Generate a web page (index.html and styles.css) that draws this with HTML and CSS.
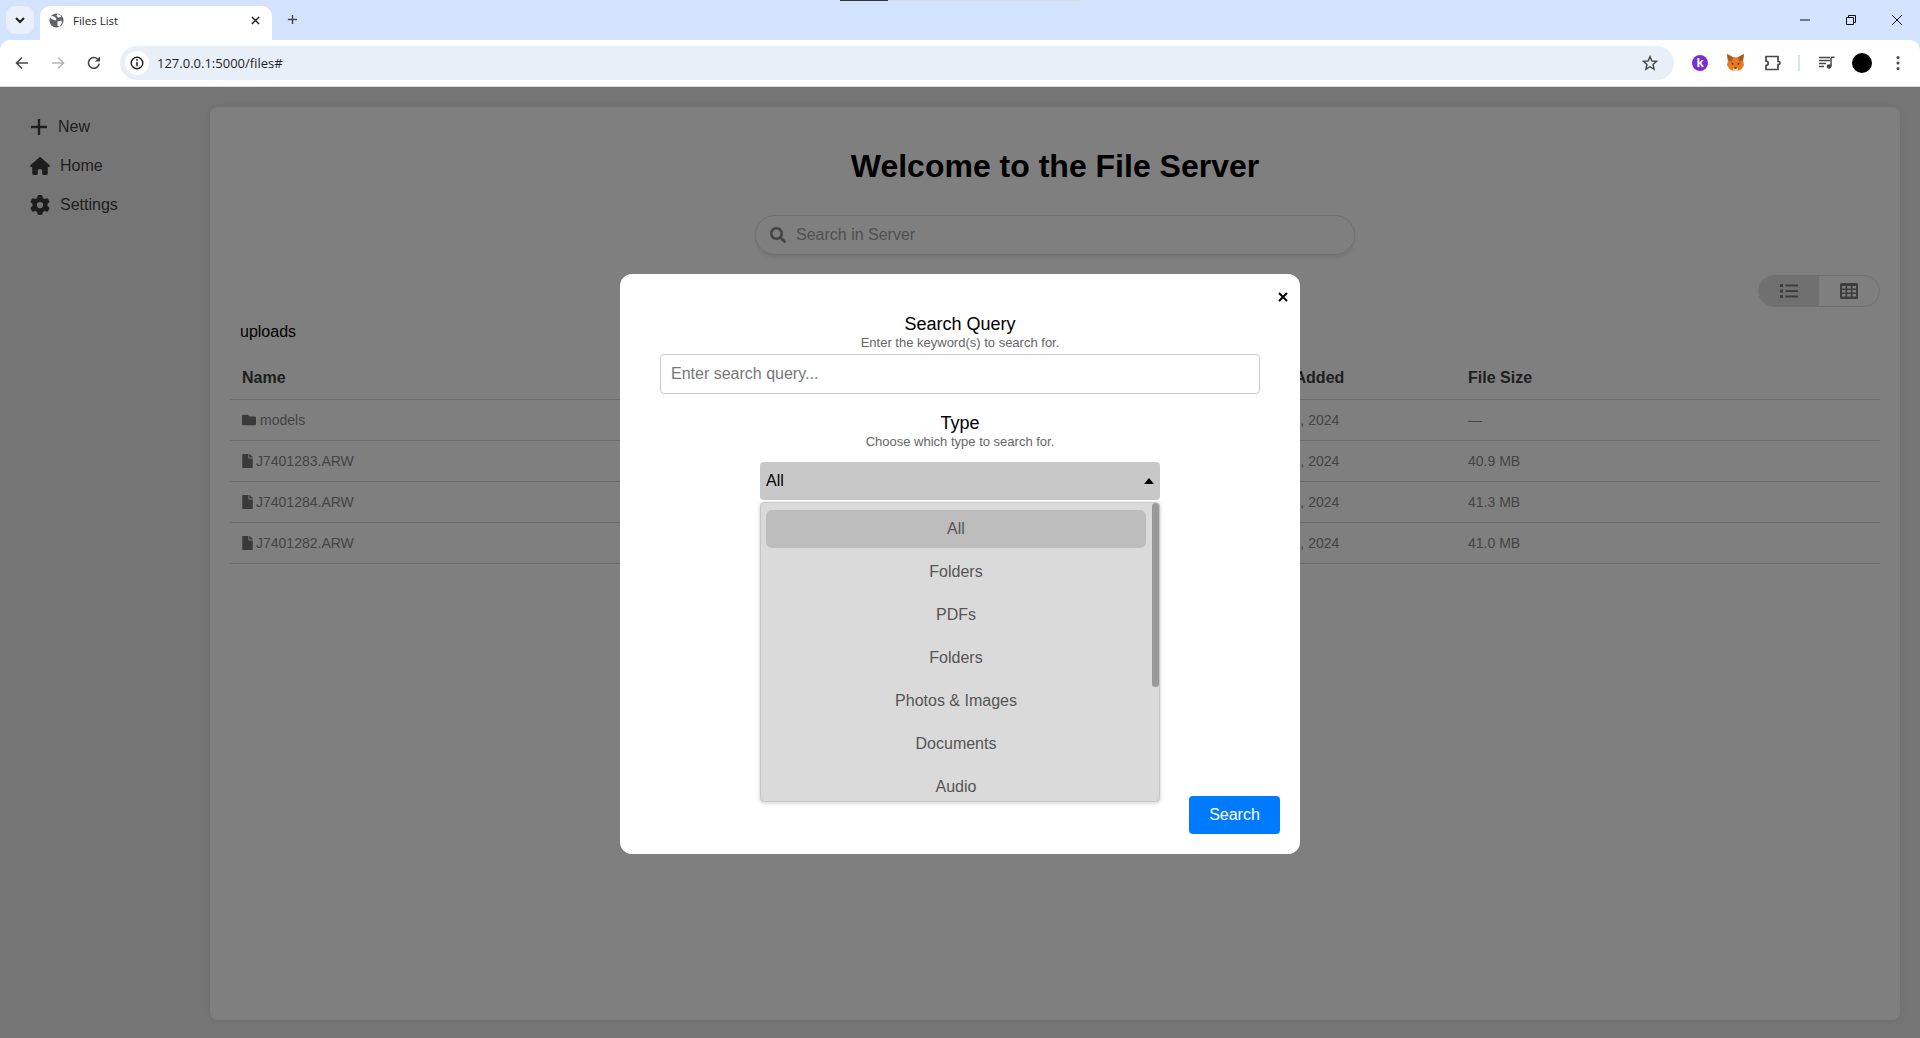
FILE: index.html
```html
<!DOCTYPE html>
<html>
<head>
  <meta charset="utf-8">
  <title>Files List</title>
  <link rel="stylesheet" href="styles.css">
</head>
<body>

  <!-- browser chrome -->
  <div class="tabstrip">
    <div class="capture-bar"></div>
    <div class="tab-search">
      <svg class="ico-16" viewBox="0 0 16 16"><path d="M4 6l4 4 4-4" fill="none" stroke="#1f1f1f" stroke-width="2"/></svg>
    </div>
    <div class="tab">
      <svg class="tab-globe" viewBox="0 0 16 16"><circle cx="8" cy="8" r="7.5" fill="#5f6368"/><path d="M3 3l3 1 2 2-1 2-3-1-3-2zM9 9l4-1 1 2-3 5-2-2z" fill="#fff"/><path d="M9 1l3 1 1 2-3 1-2-2z" fill="#fff"/></svg>
      <span class="tab-title">Files List</span>
      <svg class="tab-close" viewBox="0 0 10 10"><path d="M1 1l8 8M9 1l-8 8" stroke="#1f1f1f" stroke-width="1.6"/></svg>
    </div>
    <svg class="tab-new" viewBox="0 0 12 12"><path d="M6 1v10M1 6h10" stroke="#474747" stroke-width="1.5"/></svg>
    <div class="window-btns">
      <svg class="win-ico" viewBox="0 0 10 10"><path d="M0 5h10" stroke="#111" stroke-width="1"/></svg>
      <svg class="win-ico" viewBox="0 0 10 10"><path d="M.5 2.500h7v7h-7zM2.500 2.500v-2h7v7h-2" fill="none" stroke="#111" stroke-width="1"/></svg>
      <svg class="win-ico" viewBox="0 0 10 10"><path d="M0 0l10 10M10 0L0 10" stroke="#111" stroke-width="1"/></svg>
    </div>
  </div>

  <div class="toolbar">
    <svg class="nav-ico" viewBox="0 0 16 16"><path d="M14 8H3M8 2.500L2.500 8 8 13.500" fill="none" stroke="#474747" stroke-width="1.6"/></svg>
    <svg class="nav-ico" viewBox="0 0 16 16"><path d="M2 8h11M8 2.500L13.500 8 8 13.500" fill="none" stroke="#b4b6b9" stroke-width="1.6"/></svg>
    <svg class="nav-ico" viewBox="0 0 16 16"><path d="M13.200 8.600A5.400 5.400 0 1 1 11.800 4.200" fill="none" stroke="#474747" stroke-width="1.6"/><path d="M14 1.500v5H9z" fill="#474747"/></svg>
    <div class="omnibox">
      <div class="site-info">
        <svg class="ico-16" viewBox="0 0 16 16"><circle cx="8" cy="8" r="5.800" fill="none" stroke="#1f1f1f" stroke-width="1.4"/><path d="M8 7v4.200" stroke="#1f1f1f" stroke-width="1.5"/><circle cx="8" cy="5" r=".9" fill="#1f1f1f"/></svg>
      </div>
      <span class="url">127.0.0.1:5000/files#</span>
      <svg class="star" viewBox="0 0 16 16"><path d="M8 1.600l1.900 4.400 4.700.4-3.600 3.100 1.100 4.700L8 11.700l-4.100 2.500L5 9.500 1.400 6.400l4.700-.4z" fill="none" stroke="#474747" stroke-width="1.4"/></svg>
    </div>
    <div class="ext-group">
      <div class="ext-k">k</div>
      <svg class="ext-fox" viewBox="0 0 18 18">
        <path d="M0 0l6.500 3.500h5L18 0l-1 7 1 5-3 4.500-4 1.500H7l-4-1.500L0 12l1-5z" fill="#ea7a1e"/>
        <path d="M0 0l6.500 3.500L5 8 1 7zM18 0l-6.500 3.500L13 8l4-1z" fill="#a85a26"/>
        <path d="M6 15h6l-1 3H7z" fill="#e6d5c2"/>
        <path d="M4.500 9l3 1.500-2 1zM13.500 9l-3 1.500 2 1zM8 14h2v1.500H8z" fill="#33261c"/>
      </svg>
      <svg class="ext-puzzle" viewBox="0 0 18 18"><path d="M2 2.500h12v5h.5a1.500 1.500 0 0 1 0 3H14v5H2v-4a2.200 2.200 0 0 0 0-4.400z" fill="none" stroke="#474747" stroke-width="1.7"/></svg>
      <div class="ext-sep"></div>
      <svg class="media" viewBox="0 0 16 16"><path d="M0 2.500h11M0 5.500h11M0 8.500h7M0 11.500h5" stroke="#474747" stroke-width="1.3"/><path d="M12 3v8.500" stroke="#474747" stroke-width="1.5"/><path d="M12 2.300h3.500" stroke="#474747" stroke-width="1.5"/><circle cx="10" cy="11.500" r="2.300" fill="#474747"/></svg>
      <div class="avatar"></div>
      <svg class="kebab" viewBox="0 0 4 16"><circle cx="2" cy="2.500" r="1.500" fill="#474747"/><circle cx="2" cy="8" r="1.500" fill="#474747"/><circle cx="2" cy="13.500" r="1.500" fill="#474747"/></svg>
    </div>
  </div>

  <!-- the page itself -->
  <div class="page">
    <aside class="sidebar">
      <a class="side-link" href="#">
        <svg class="side-plus" viewBox="0 0 16 16"><path d="M8 0v16M0 8h16" stroke="#3d3d3d" stroke-width="2.4"/></svg>
        <span>New</span>
      </a>
      <a class="side-link" href="#">
        <svg class="side-ico" viewBox="0 0 576 512"><path d="M575.800 255.500c0 18-15 32.100-32 32.100h-32l.7 160.200c0 2.700-.2 5.400-.5 8.100V472c0 22.100-17.900 40-40 40H456c-1.100 0-2.200 0-3.300-.1c-1.400 .1-2.800 .1-4.200 .1H416 392c-22.100 0-40-17.900-40-40V448 384c0-17.700-14.300-32-32-32H256c-17.700 0-32 14.300-32 32v64 24c0 22.100-17.900 40-40 40H160 128.100c-1.500 0-3-.1-4.500-.2c-1.200 .1-2.400 .2-3.600 .2H104c-22.100 0-40-17.900-40-40V360c0-.9 0-1.900 .1-2.800V287.600H32c-18 0-32-14-32-32.100c0-9 3-17 10-24L266.400 8c7-7 15-8 22-8s15 2 21 7L564.800 231.500c8 7 12 15 11 24z"/></svg>
        <span>Home</span>
      </a>
      <a class="side-link" href="#">
        <svg class="side-ico" viewBox="0 0 512 512"><path d="M495.900 166.600c3.200 8.700 .5 18.400-6.400 24.600l-43.300 39.400c1.100 8.300 1.700 16.800 1.700 25.400s-.6 17.100-1.700 25.400l43.300 39.400c6.900 6.200 9.600 15.900 6.400 24.600c-4.400 11.900-9.700 23.300-15.800 34.300l-4.700 8.100c-6.600 11-14 21.400-22.100 31.200c-5.900 7.200-15.700 9.600-24.500 6.800l-55.700-17.700c-13.400 10.300-28.200 18.900-44 25.400l-12.500 57.100c-2 9.100-9 16.300-18.200 17.800c-13.800 2.300-28 3.500-42.500 3.500s-28.700-1.200-42.500-3.500c-9.200-1.500-16.200-8.700-18.200-17.800l-12.500-57.100c-15.800-6.500-30.600-15.100-44-25.400L83.100 425.900c-8.800 2.800-18.600 .3-24.500-6.800c-8.100-9.800-15.500-20.200-22.100-31.200l-4.700-8.100c-6.100-11-11.400-22.400-15.800-34.300c-3.200-8.700-.5-18.400 6.400-24.600l43.300-39.400C64.600 273.100 64 264.600 64 256s.6-17.100 1.700-25.400L22.400 191.200c-6.900-6.200-9.600-15.900-6.400-24.600c4.400-11.900 9.700-23.300 15.800-34.300l4.700-8.100c6.600-11 14-21.400 22.100-31.200c5.900-7.200 15.700-9.600 24.500-6.800l55.700 17.700c13.400-10.300 28.200-18.900 44-25.400l12.500-57.100c2-9.100 9-16.300 18.200-17.800C227.300 1.200 241.500 0 256 0s28.700 1.200 42.500 3.500c9.200 1.500 16.200 8.700 18.200 17.800l12.500 57.100c15.800 6.500 30.600 15.100 44 25.400l55.700-17.700c8.800-2.800 18.600-.3 24.500 6.800c8.100 9.800 15.500 20.200 22.100 31.200l4.700 8.100c6.100 11 11.400 22.400 15.800 34.300zM256 336a80 80 0 1 0 0-160 80 80 0 1 0 0 160z"/></svg>
        <span>Settings</span>
      </a>
    </aside>

    <main class="panel">
      <h1 class="welcome">Welcome to the File Server</h1>
      <div class="server-search">
        <svg class="server-search-ico" viewBox="0 0 512 512"><path d="M505 442.700L405.300 343c-4.500-4.500-10.600-7-17-7H372c27.600-35.300 44-79.700 44-128C416 93.100 322.900 0 208 0S0 93.100 0 208s93.100 208 208 208c48.300 0 92.700-16.400 128-44v16.300c0 6.400 2.500 12.500 7 17l99.700 99.700c9.400 9.400 24.600 9.400 33.900 0l28.300-28.300c9.400-9.400 9.400-24.600.1-34zM208 336c-70.700 0-128-57.200-128-128 0-70.700 57.200-128 128-128 70.700 0 128 57.200 128 128 0 70.700-57.200 128-128 128z"/></svg>
        <span>Search in Server</span>
      </div>

      <div class="view-row">
        <div class="view-toggle">
          <div class="view-btn view-btn-on">
            <svg class="view-ico" viewBox="0 0 18 16"><path d="M0 1h3v3H0zM0 6.500h3v3H0zM0 12h3v3H0z"/><path d="M5.500 1.500H18v2H5.500zM5.500 7H18v2H5.500zM5.500 12.500H18v2H5.500z"/></svg>
          </div>
          <div class="view-btn">
            <svg class="view-ico" viewBox="0 0 18 16"><path fill-rule="evenodd" d="M1.500 0h15A1.500 1.500 0 0 1 18 1.500v13a1.500 1.500 0 0 1-1.500 1.500h-15A1.500 1.500 0 0 1 0 14.500v-13A1.500 1.500 0 0 1 1.500 0zM2 3v2.500h3.500V3zM7.200 3v2.500h3.600V3zM12.500 3v2.500H16V3zM2 7v2.500h3.500V7zM7.200 7v2.500h3.600V7zM12.500 7v2.500H16V7zM2 11v2.500h3.500V11zM7.200 11v2.500h3.600V11zM12.500 11v2.500H16V11z"/></svg>
          </div>
        </div>
      </div>

      <div class="crumb">uploads</div>

      <table class="files">
        <colgroup><col class="col-name"><col class="col-date"><col></colgroup>
        <thead>
          <tr><th>Name</th><th>Date Added</th><th>File Size</th></tr>
        </thead>
        <tbody>
          <tr>
            <td><svg class="folder-ico" viewBox="0 0 512 512"><path d="M464 128H272l-64-64H48C21.490 64 0 85.490 0 112v288c0 26.510 21.490 48 48 48h416c26.510 0 48-21.490 48-48V176c0-26.510-21.490-48-48-48z"/></svg>models</td>
            <td>Sep 14, 2024</td><td>—</td>
          </tr>
          <tr>
            <td><svg class="file-ico" viewBox="0 0 384 512"><path d="M224 136V0H24C10.700 0 0 10.700 0 24v464c0 13.300 10.700 24 24 24h336c13.300 0 24-10.700 24-24V160H248c-13.200 0-24-10.800-24-24zm160-14.100v6.100H256V0h6.100c6.400 0 12.500 2.500 17 7l97.900 98c4.500 4.500 7 10.600 7 16.900z"/></svg>J7401283.ARW</td>
            <td>Sep 14, 2024</td><td>40.9 MB</td>
          </tr>
          <tr>
            <td><svg class="file-ico" viewBox="0 0 384 512"><path d="M224 136V0H24C10.700 0 0 10.700 0 24v464c0 13.300 10.700 24 24 24h336c13.300 0 24-10.700 24-24V160H248c-13.200 0-24-10.800-24-24zm160-14.100v6.100H256V0h6.100c6.400 0 12.500 2.500 17 7l97.900 98c4.500 4.500 7 10.600 7 16.900z"/></svg>J7401284.ARW</td>
            <td>Sep 14, 2024</td><td>41.3 MB</td>
          </tr>
          <tr>
            <td><svg class="file-ico" viewBox="0 0 384 512"><path d="M224 136V0H24C10.700 0 0 10.700 0 24v464c0 13.300 10.700 24 24 24h336c13.300 0 24-10.700 24-24V160H248c-13.200 0-24-10.800-24-24zm160-14.100v6.100H256V0h6.100c6.400 0 12.500 2.500 17 7l97.900 98c4.500 4.500 7 10.600 7 16.900z"/></svg>J7401282.ARW</td>
            <td>Sep 14, 2024</td><td>41.0 MB</td>
          </tr>
        </tbody>
      </table>
    </main>

    <!-- search modal -->
    <div class="overlay">
      <div class="modal">
        <svg class="modal-close" viewBox="0 0 10 10"><path d="M1 1l8 8M9 1l-8 8" stroke="#000" stroke-width="2"/></svg>

        <div class="field-label">Search Query</div>
        <div class="field-hint">Enter the keyword(s) to search for.</div>
        <input class="query" type="text" placeholder="Enter search query...">

        <div class="field-label field-label-type">Type</div>
        <div class="field-hint">Choose which type to search for.</div>
        <div class="type-select">
          <span>All</span>
          <span class="caret"></span>
          <ul class="type-list">
            <li class="type-on">All</li>
            <li>Folders</li>
            <li>PDFs</li>
            <li>Folders</li>
            <li>Photos &amp; Images</li>
            <li>Documents</li>
            <li>Audio</li>
          </ul>
          <div class="type-thumb"></div>
        </div>

        <div class="modal-foot">
          <button class="search-btn">Search</button>
        </div>
      </div>
    </div>
  </div>

</body>
</html>
```

FILE: styles.css
```css
* { box-sizing: border-box; }
html, body { height: 100%; }
body {
  margin: 0;
  display: flex;
  flex-direction: column;
  overflow: hidden;
  font-family: "Liberation Sans", Arial, sans-serif;
  background: #d3e3fd;
}

/* browser chrome */
.tabstrip { height: 40px; display: flex; align-items: flex-end; position: relative; padding-left: 6px; background: #d3e3fd; flex: none; }
.capture-bar { position: absolute; top: 0; left: 840px; width: 241px; height: 1px; background: linear-gradient(to right, #333 0, #333 48px, #dcdcdc 48px); }
.tab-search { width: 28px; height: 28px; margin-bottom: 6px; display: flex; align-items: center; justify-content: center; background: #e9f0fc; border-radius: 9px; }
.ico-16 { width: 16px; height: 16px; display: block; }
.tab { width: 232px; height: 34px; margin-left: 6px; padding: 0 12px 6px 9px; display: flex; align-items: center; background: #fff; border-radius: 10px 10px 0 0; }
.tab-globe { width: 15px; height: 15px; flex: none; }
.tab-title { margin-left: 9px; font-size: 11.5px; color: #1f1f1f; font-family: "Open Sans", sans-serif; flex: 1; }
.tab-close { width: 9px; height: 9px; }
.tab-new { width: 11px; height: 11px; margin: 0 0 15px 15px; }
.window-btns { margin-left: auto; display: flex; height: 40px; align-items: center; }
.win-ico { width: 10px; height: 10px; margin: 0 18px; }

.toolbar { height: 47px; flex: none; display: flex; align-items: center; padding: 0 8px 1px 14px; background: #fff; border-radius: 10px 10px 0 0; border-bottom: 1px solid #dcdcdc; }
.nav-ico { width: 16px; height: 16px; margin-right: 20px; }
.omnibox { width: 1554px; height: 34px; margin-left: -2px; display: flex; align-items: center; padding: 0 25px 0 5px; background: #e9eff9; border-radius: 17px; }
.site-info { width: 24px; height: 24px; display: flex; align-items: center; justify-content: center; background: #fff; border-radius: 50%; }
.url { margin-left: 8px; font-size: 13px; color: #1f1f1f; font-family: "Open Sans", sans-serif; flex: 1; }
.star { width: 16px; height: 16px; margin-right: -9px; }
.ext-group { display: flex; align-items: center; margin-left: 18px; }
.ext-k { width: 16px; height: 16px; border-radius: 50%; background: #7e2ed0; color: #fff; font-size: 13px; font-weight: bold; line-height: 15px; text-align: center; }
.ext-fox { width: 17px; height: 17px; margin-left: 19px; }
.ext-puzzle { width: 18px; height: 18px; margin-left: 20px; }
.ext-sep { width: 2px; height: 16px; margin-left: 16px; background: #d3e3fd; }
.media { width: 16px; height: 16px; margin-left: 19px; }
.avatar { width: 20px; height: 20px; margin-left: 17px; background: #000; border-radius: 50%; }
.kebab { width: 4px; height: 16px; margin-left: 24px; }

/* page under the modal */
.page { flex: 1; min-height: 0; display: flex; position: relative; background: #ebebeb; }
.sidebar { width: 210px; flex: none; padding: 20px 0 0 30px; display: flex; flex-direction: column; }
.side-link { height: 39px; display: flex; align-items: center; font-size: 16px; color: #3e3e3e; text-decoration: none; }
.side-ico { width: 20px; height: 20px; fill: #3a3a3a; margin-right: 10px; flex: none; }
.side-plus { width: 16px; height: 16px; margin: 0 11px 0 1px; flex: none; }

.panel { width: 1690px; margin: 20px 0 18px; padding: 0 20px; background: #fff; border-radius: 8px; box-shadow: 0 0 10px rgba(0,0,0,.08); }
.welcome { margin: 39px 0 0; font-size: 32px; line-height: 40px; text-align: center; color: #000; }
.server-search { width: 600px; height: 40px; margin: 29px auto 0; padding: 0 14px; display: flex; align-items: center; gap: 10px; font-size: 16px; color: #a0a0a0; border: 1px solid #ddd; border-radius: 20px; box-shadow: 0 2px 4px rgba(0,0,0,.1); }
.server-search-ico { width: 16px; height: 16px; fill: #888; flex: none; }
.view-row { display: flex; justify-content: flex-end; margin-top: 20px; }
.view-toggle { display: flex; width: 122px; height: 32px; border: 1px solid #e0e0e0; border-radius: 16px; overflow: hidden; }
.view-btn { flex: 1; display: flex; align-items: center; justify-content: center; }
.view-btn-on { background: #e0e0e0; }
.view-ico { width: 18px; height: 16px; fill: #7a7a7a; }
.crumb { margin: 16px 0 0 10px; font-size: 16px; line-height: 18px; color: #000; }
.files { width: 100%; margin-top: 13px; border-collapse: collapse; table-layout: fixed; }
.col-name { width: 1014px; }
.col-date { width: 212px; }
.files th { height: 45px; padding: 0 12px 12px; vertical-align: bottom; text-align: left; font-size: 16px; line-height: 18px; color: #3e3e3e; border-bottom: 1px solid #d4d4d4; }
.files td { height: 41px; padding: 0 12px; font-size: 14px; color: #888; border-bottom: 1px solid #d4d4d4; }
.folder-ico { width: 14px; height: 14px; fill: #747474; vertical-align: -2px; margin-right: 4px; }
.file-ico { width: 11px; height: 14px; fill: #747474; vertical-align: -2px; margin-right: 3px; }

/* modal */
.overlay { position: absolute; inset: 0; padding-top: 3px; display: flex; align-items: center; justify-content: center; background: rgba(0,0,0,.5); }
.modal { width: 680px; height: 580px; padding: 38px 40px 0; position: relative; display: flex; flex-direction: column; align-items: center; background: #fff; border-radius: 12px; }
.modal-close { width: 10px; height: 10px; position: absolute; top: 18px; right: 12px; }
.field-label { font-size: 18px; line-height: 24px; color: #000; }
.field-label-type { margin-top: 18px; line-height: 23px; }
.field-hint { font-size: 13px; line-height: 13px; color: #666; }
.query { width: 600px; height: 40px; margin-top: 5px; padding: 0 10px; font: 16px "Liberation Sans", Arial, sans-serif; border: 1px solid #ccc; border-radius: 4px; }
.query::placeholder { color: #777; }
.type-select { width: 400px; height: 38px; margin-top: 14px; padding: 0 6px; position: relative; display: flex; align-items: center; justify-content: space-between; font-size: 16px; color: #000; background: #c8c8c8; border-radius: 4px; }
.caret { width: 0; height: 0; border: 5px solid transparent; border-top: 0; border-bottom: 6px solid #000; }
.type-list { position: absolute; top: 40px; left: 0; width: 400px; height: 300px; margin: 0; padding: 7px 13px 0 5px; list-style: none; overflow: hidden; background: #dadada; border: 1px solid #c6c6c6; border-radius: 4px; box-shadow: 0 1px 4px rgba(0,0,0,.2); }
.type-list li { height: 38px; margin-bottom: 5px; display: flex; align-items: center; justify-content: center; font-size: 16px; color: #555; border-radius: 6px; }
.type-list .type-on { background: #bdbdbd; }
.type-thumb { position: absolute; top: 41px; right: 1px; width: 7px; height: 184px; background: #999; border-radius: 4px; }
.modal-foot { position: absolute; right: 20px; bottom: 20px; }
.search-btn { width: 91px; height: 38px; font: 16px "Liberation Sans", Arial, sans-serif; color: #fff; background: #007bff; border: 0; border-radius: 4px; }
```
